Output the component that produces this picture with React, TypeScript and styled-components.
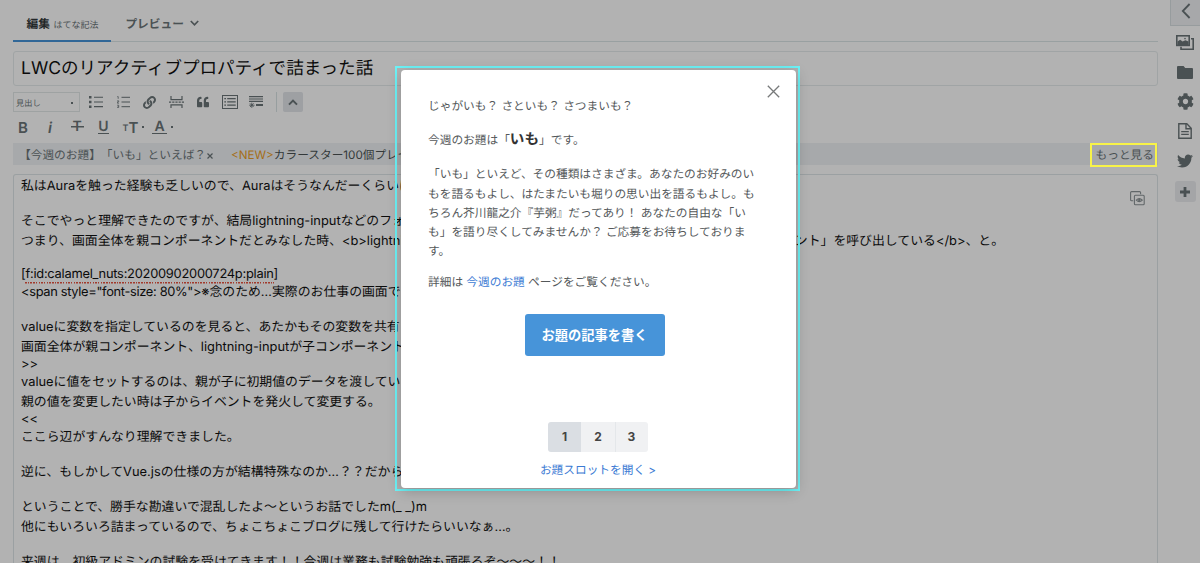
import React from "react";
import styled, { createGlobalStyle } from "styled-components";
import { FaCog, FaLink, FaQuoteLeft, FaTwitter } from "react-icons/fa";

const ink = "#6b7578";
const blue = "#4794d9";

const GlobalStyle = createGlobalStyle`
  * { box-sizing: border-box; }
  html, body { margin: 0; height: 563px; overflow: hidden; background: #fff; }
  body {
    font-family: Inter, "Noto Sans CJK JP", sans-serif;
    font-size: 11.7px;
    color: #555b5e;
    text-rendering: geometricPrecision;
    text-spacing-trim: space-all;
    -webkit-font-smoothing: antialiased;
  }
  p { margin: 0; }
  button { font: inherit; color: inherit; border: 0; padding: 0; background: none; }
  svg { display: block; flex: none; }
`;

const Screen = styled.div`
  position: relative;
  display: flex;
  justify-content: space-between;
  width: 1200px;
  height: 563px;
  overflow: hidden;
`;

const Editor = styled.main`
  display: flex;
  flex-direction: column;
  width: 1145px;
  margin-left: 13px;
`;

const Tabs = styled.nav`
  display: flex;
  height: 42px;
  box-shadow: inset 0 -1px 0 #dbe5e7;
`;

const Tab = styled.div<{ $active?: boolean }>`
  display: flex;
  align-items: center;
  gap: ${(p) => (p.$active ? 3.5 : 6)}px;
  padding: 7px 13px 0 ${(p) => (p.$active ? 13.5 : 14)}px;
  font-weight: 700;
  white-space: nowrap;
  color: ${(p) => (p.$active ? "#33393b" : ink)};
  border-bottom: 2px solid ${(p) => (p.$active ? blue : "transparent")};
`;

const Syntax = styled.span`
  font-size: 9px;
  font-weight: 400;
  padding-top: 1px;
  color: ${ink};
`;

const TitleField = styled.div`
  display: flex;
  align-items: center;
  height: 35px;
  margin-top: 9px;
  padding: 0 7px 2px;
  border: 1px solid #e6ebec;
  border-radius: 3px;
  font-size: 17.56px;
  color: #111;
  white-space: nowrap;
`;

const Toolbar = styled.div`
  display: flex;
  align-items: center;
  height: 20px;
  margin-top: 6px;
  color: ${ink};
`;

const StyleBar = styled(Toolbar)`
  height: 26px;
  margin-top: 1px;
  padding-top: 2px;
`;

const HeadingSelect = styled.div`
  display: flex;
  align-items: center;
  justify-content: space-between;
  width: 67px;
  height: 20px;
  margin-right: 3px;
  padding: 2px 6px 0 2px;
  border: 1px solid #e2e8e9;
  font-size: 8.2px;
`;

const Tool = styled.span<{ $w?: number }>`
  display: flex;
  align-items: center;
  justify-content: center;
  width: ${(p) => p.$w ?? 26.7}px;
  height: 20px;
`;

const Divider = styled.span`
  width: 1px;
  height: 20px;
  margin: 0 6px 0 6px;
  background: #d9e2e4;
`;

const FoldButton = styled.button`
  display: flex;
  align-items: center;
  justify-content: center;
  width: 20px;
  height: 20px;
  border-radius: 2px;
  background: #e2e5ea;
`;

const Glyph = styled.b<{ $italic?: boolean; $size?: number }>`
  font-family: Inter, sans-serif;
  font-size: ${(p) => p.$size ?? 15}px;
  font-weight: 600;
  font-style: ${(p) => (p.$italic ? "italic" : "normal")};
  line-height: 1;
`;

const Underlined = styled(Glyph)<{ $bar: number }>`
  display: flex;
  justify-content: center;
  width: ${(p) => p.$bar}px;
  line-height: 12px;
  border-bottom: 1.5px solid ${ink};
`;

const Struck = styled(Glyph)`
  display: flex;
  justify-content: center;
  width: 13px;
  background: linear-gradient(${ink}, ${ink}) center / 13px 1.5px no-repeat;
`;

const Small = styled(Glyph)`
  align-self: flex-end;
  padding-bottom: 4px;
`;

const Dot = styled.i`
  width: 2px;
  height: 2px;
  margin-left: 4px;
  background: ${ink};
`;

const TopicBar = styled.div`
  display: flex;
  align-items: center;
  height: 22px;
  margin-top: 4px;
  padding: 0 4px 0 6px;
  background: #f0f2f5;
  color: ${ink};
  white-space: nowrap;
`;

const Topic = styled.span`
  display: flex;
  align-items: center;
  margin-right: 17px;
  svg { margin-top: 3px; }
`;

const News = styled.span`
  color: #4b5254;
  em { font-style: normal; color: #ec9e25; }
`;

const More = styled.span`
  margin-left: auto;
`;

const Body = styled.section`
  position: relative;
  flex: 1;
  min-height: 0;
  margin-top: 9px;
  padding: 2px 7px 0;
  border: 1px solid #dfe6e8;
  border-bottom: 0;
  border-radius: 3px 3px 0 0;
  overflow: hidden;
`;

const Line = styled.p<{ $h?: number; $spread?: number; $track?: number }>`
  display: flex;
  justify-content: ${(p) => (p.$spread ? "space-between" : "flex-start")};
  width: ${(p) => (p.$spread ? `${p.$spread}px` : "auto")};
  height: ${(p) => p.$h ?? 19.5}px;
  line-height: ${(p) => p.$h ?? 19.5}px;
  font-size: 12.87px;
  letter-spacing: ${(p) => p.$track ?? 0}px;
  color: #111;
  white-space: pre;
`;

const Misspelt = styled.span`
  height: 17px;
  background: repeating-linear-gradient(90deg, #e8533f 0 1.5px, transparent 1.5px 2.7px) left bottom / 100% 1.5px no-repeat;
`;

const Markup = styled.span`
  letter-spacing: -0.33px;
`;

const PreviewToggle = styled.span`
  position: absolute;
  top: 16px;
  right: 12px;
  color: #8c9497;
`;

const Sidebar = styled.aside`
  display: flex;
  flex-direction: column;
  align-items: center;
  width: 30px;
  color: ${ink};
`;

const Collapse = styled.button`
  display: flex;
  align-items: center;
  justify-content: center;
  width: 30px;
  height: 26px;
  padding-bottom: 3px;
  background: #eff1f4;
  border-left: 1px solid #d9e0e3;
  border-bottom: 1px solid #d9e0e3;
`;

const SideItem = styled.span<{ $h?: number }>`
  display: flex;
  align-items: center;
  justify-content: center;
  height: ${(p) => p.$h ?? 30}px;
`;

const AddButton = styled.button`
  display: flex;
  align-items: center;
  justify-content: center;
  width: 21px;
  height: 21px;
  margin-top: 6px;
  border-radius: 3px;
  background: #ebedf0;
`;

const Overlay = styled.div`
  position: absolute;
  inset: 0;
  background: rgba(0, 0, 0, 0.3);
`;

const MoreHighlight = styled.div`
  position: absolute;
  left: 1090px;
  top: 143px;
  width: 67px;
  height: 24px;
  border: 2px solid #f8f348;
`;

const ModalHighlight = styled.div`
  position: absolute;
  left: 395px;
  top: 66px;
  width: 405px;
  height: 425px;
  padding: 2px 2px 1px 4px;
  border: 2px solid #6cf3f7;
`;

const Modal = styled.section`
  position: relative;
  display: flex;
  flex-direction: column;
  align-items: center;
  width: 395px;
  height: 418px;
  padding: 27px 28px 0 27px;
  border-radius: 4px;
  background: #fff;
  box-shadow: 0 3px 14px rgba(0, 0, 0, 0.22);
  color: #54585a;
`;

const Close = styled.button`
  position: absolute;
  top: 15px;
  right: 16px;
  color: #77797a;
`;

const Copy = styled.p<{ $gap?: number }>`
  width: 100%;
  margin-top: ${(p) => p.$gap ?? 0}px;
  line-height: 19.2px;
  white-space: nowrap;
  strong { font-size: 14.6px; line-height: 1; color: #333; }
`;

const Link = styled.a`
  color: #3c7bd4;
`;

const WriteButton = styled.button`
  width: 140px;
  height: 42px;
  margin: 21px 7px 0 0;
  border-radius: 3px;
  background: ${blue};
  color: #fff;
  font-size: 13.25px;
  font-weight: 700;
`;

const Pager = styled.div`
  display: flex;
  width: 100px;
  height: 30px;
  margin-top: 66px;
  border-radius: 3px;
  overflow: hidden;
`;

const Page = styled.button<{ $current?: boolean }>`
  flex: 1;
  background: ${(p) => (p.$current ? "#dadee3" : "#f0f1f3")};
  color: #444;
  font-size: 12px;
  font-weight: 700;
  & + & + & { box-shadow: inset 1px 0 0 #e4e7ea; }
`;

const SlotLink = styled(Link)`
  margin-top: 9px;
  line-height: 18px;
  white-space: nowrap;
`;

const Chevron = ({ d, w, h, s = 2 }: { d: string; w: number; h: number; s?: number }) => (
  <svg width={w} height={h} viewBox={`0 0 ${w} ${h}`} fill="none" stroke="currentColor" strokeWidth={s}>
    <path d={d} />
  </svg>
);

const BulletIcon = () => (
  <svg width="14" height="12" viewBox="0 0 14 12" fill="currentColor">
    <path d="M0 0h2.5v2.5H0zM0 4.7h2.5v2.5H0zM0 9.4h2.5v2.5H0zM5 .7h9v1.1H5zM5 5.4h9v1.1H5zM5 10.1h9v1.1H5z" />
  </svg>
);

const NumberIcon = () => (
  <svg width="13" height="12" viewBox="0 0 13 12" fill="none" stroke="currentColor">
    <path d="M4.5 1.3H13M4.5 6H13M4.5 10.7H13" />
    <path strokeWidth=".8" d="M.3.6h.9v2.2M.2 4.8h1.5v1.1H.4v1.3h1.5M.2 9.2h1.5v2.3H.2M.6 10.3h1" />
  </svg>
);

const BreakIcon = () => (
  <svg width="15" height="12" viewBox="0 0 15 12" fill="none" stroke="currentColor" strokeWidth="1.2">
    <path d="M2 0v3.6h11V0M2 12V8.8h11V12" />
    <path strokeDasharray="2.2 1" d="M0 6.2h15" />
  </svg>
);

const ContentsIcon = () => (
  <svg width="16" height="14" viewBox="0 0 16 14" fill="none" stroke="currentColor">
    <rect x=".5" y=".5" width="15" height="13" />
    <path strokeWidth="1.2" d="M2.3 3.6H4M5.2 3.6h8.5M2.3 6.9H4M5.2 6.9h8.5M2.3 10.2H4M5.2 10.2h8.5" />
  </svg>
);

const FootnoteIcon = () => (
  <svg width="14" height="12" viewBox="0 0 14 12" fill="none" stroke="currentColor">
    <path strokeWidth="1.1" d="M0 .6h14M0 3h14M0 5.4h14" />
    <path strokeWidth="2" d="M7 9h7" />
    <path strokeWidth=".9" d="M2.8 6.6v5.2M.2 9.2h5.4M1 7.4l3.6 3.6M4.6 7.4L1 11" />
  </svg>
);

const PhotosIcon = () => (
  <svg width="18" height="15" viewBox="0 0 18 15" fill="none" stroke="currentColor" strokeWidth="1.6">
    <rect x=".8" y=".8" width="12.4" height="9.6" />
    <path d="M15 3.8h2.2v10.4H5v-2.4" />
    <path fill="currentColor" stroke="none" d="M1.5 10V6.6l2.6-1.8 2.5 1.6L9.4 5.2l3.2 1.4V10z" />
    <circle cx="9" cy="3.6" r=".8" fill="currentColor" stroke="none" />
  </svg>
);

const FolderIcon = () => (
  <svg width="16" height="13" viewBox="0 0 16 13" fill="currentColor">
    <path d="M1 0h5.6l1.6 2H15a1 1 0 0 1 1 1v9a1 1 0 0 1-1 1H1a1 1 0 0 1-1-1V1a1 1 0 0 1 1-1z" />
  </svg>
);

const DocumentIcon = () => (
  <svg width="14" height="16" viewBox="0 0 14 16" fill="none" stroke="currentColor" strokeWidth="1.4">
    <path d="M.8.8h8l4.4 4.4v10H.8z" />
    <path d="M8 .8v5h5" />
    <path strokeWidth="1.2" d="M3.2 8.6h7.6M3.2 11.4h7.6" />
  </svg>
);

const PreviewIcon = () => (
  <svg width="15" height="15" viewBox="0 0 15 15" fill="none" stroke="currentColor" strokeWidth="1.1">
    <path d="M3.2 9.8H1.6a1 1 0 0 1-1-1V1.6a1 1 0 0 1 1-1h8a1 1 0 0 1 1 1v1.6" />
    <rect x="4.4" y="4.2" width="9.8" height="9.6" rx="1" />
    <path d="M6.3 9.1q3-3 6 0-3 3-6 0z" />
    <circle cx="9.3" cy="9.1" r=".7" />
  </svg>
);

const Blank = () => <Line $h={15.6} />;

export default function App() {
  return (
    <>
      <GlobalStyle />
      <Screen>
        <Editor>
          <Tabs>
            <Tab $active>
              編集<Syntax>はてな記法</Syntax>
            </Tab>
            <Tab>
              プレビュー
              <Chevron w={9} h={7} d="M.8 1L4.5 4.8 8.2 1" s={1.7} />
            </Tab>
          </Tabs>
          <TitleField>LWCのリアクティブプロパティで詰まった話</TitleField>
          <Toolbar>
            <HeadingSelect>
              見出し
              <Dot />
            </HeadingSelect>
            <Tool><BulletIcon /></Tool>
            <Tool><NumberIcon /></Tool>
            <Tool><FaLink size={13} /></Tool>
            <Tool><BreakIcon /></Tool>
            <Tool><FaQuoteLeft size={12} /></Tool>
            <Tool><ContentsIcon /></Tool>
            <Tool><FootnoteIcon /></Tool>
            <Divider />
            <FoldButton>
              <Chevron w={10} h={7} d="M1 5.6L5 1.6 9 5.6" />
            </FoldButton>
          </Toolbar>
          <StyleBar>
            <Tool $w={20}><Glyph>B</Glyph></Tool>
            <Tool $w={34}><Glyph $italic>i</Glyph></Tool>
            <Tool $w={20}><Struck $size={14}>T</Struck></Tool>
            <Tool $w={33}><Underlined $bar={11} $size={14}>U</Underlined></Tool>
            <Tool $w={27}>
              <Small $size={9}>T</Small><Glyph>T</Glyph><Dot />
            </Tool>
            <Tool $w={31}>
              <Underlined $bar={15} $size={14}>A</Underlined><Dot />
            </Tool>
          </StyleBar>
          <TopicBar>
            <Topic>【今週のお題】「いも」といえば？<Chevron w={8} h={6} d="M1.5 .5l5 5M6.5 .5l-5 5" s={1.2} /></Topic>
            <News><em>&lt;NEW&gt;</em>カラースター100個プレゼント</News>
            <More>もっと見る</More>
          </TopicBar>
          <Body>
            <Line>私はAuraを触った経験も乏しいので、Auraはそうなんだーくらいに</Line>
            <Blank />
            <Line>そこでやっと理解できたのですが、結局lightning-inputなどのフォ</Line>
            <Line $spread={983}>
              <span>つまり、画面全体を親コンポーネントだとみなした時、&lt;b&gt;lightning</span>
              <span>ネント」を呼び出している&lt;/b&gt;、と。</span>
            </Line>
            <Blank />
            <Line $h={16.4} $track={-0.25}>
              [<Misspelt>f:id:calamel_nuts:20200902000724p:plain</Misspelt>]
            </Line>
            <Line>
              <Markup>&lt;span style="font-size: 80%"&gt;</Markup>※念のため…実際のお仕事の画面では
            </Line>
            <Blank />
            <Line>valueに変数を指定しているのを見ると、あたかもその変数を共有</Line>
            <Line>画面全体が親コンポーネント、lightning-inputが子コンポーネント</Line>
            <Line $h={15.9}>&gt;&gt;</Line>
            <Line>valueに値をセットするのは、親が子に初期値のデータを渡している</Line>
            <Line>親の値を変更したい時は子からイベントを発火して変更する。</Line>
            <Line $h={15.8}>&lt;&lt;</Line>
            <Line>ここら辺がすんなり理解できました。</Line>
            <Blank />
            <Line>逆に、もしかしてVue.jsの仕様の方が結構特殊なのか…？？だから</Line>
            <Blank />
            <Line>ということで、勝手な勘違いで混乱したよ〜というお話でしたm(_ _)m</Line>
            <Line>他にもいろいろ詰まっているので、ちょこちょこブログに残して行けたらいいなぁ…。</Line>
            <Blank />
            <Line>来週は、初級アドミンの試験を受けてきます！！今週は業務も試験勉強も頑張るぞ〜〜〜！！</Line>
            <PreviewToggle><PreviewIcon /></PreviewToggle>
          </Body>
        </Editor>
        <Sidebar>
          <Collapse>
            <Chevron w={10} h={16} d="M8.6 1L1.8 8l6.8 7" s={1.8} />
          </Collapse>
          <SideItem $h={32}><PhotosIcon /></SideItem>
          <SideItem $h={29}><FolderIcon /></SideItem>
          <SideItem $h={28}><FaCog size={17} /></SideItem>
          <SideItem $h={32}><DocumentIcon /></SideItem>
          <SideItem $h={28}><FaTwitter size={16} /></SideItem>
          <AddButton>
            <Chevron w={10} h={10} d="M5 0v10M0 5h10" s={2.8} />
          </AddButton>
        </Sidebar>
        <Overlay />
        <MoreHighlight />
        <ModalHighlight>
          <Modal>
            <Close>
              <Chevron w={13} h={13} d="M.8 .8l11.4 11.4M12.2 .8L.8 12.2" s={1.3} />
            </Close>
            <Copy>じゃがいも？ さといも？ さつまいも？</Copy>
            <Copy $gap={15}>今週のお題は「<strong>いも</strong>」です。</Copy>
            <Copy $gap={15}>
              「いも」といえど、その種類はさまざま。あなたのお好みのい<br />
              もを語るもよし、はたまたいも堀りの思い出を語るもよし。も<br />
              ちろん芥川龍之介『芋粥』だってあり！ あなたの自由な「い<br />
              も」を語り尽くしてみませんか？ ご応募をお待ちしておりま<br />
              す。
            </Copy>
            <Copy $gap={12}>
              詳細は <Link>今週のお題</Link> ページをご覧ください。
            </Copy>
            <WriteButton>お題の記事を書く</WriteButton>
            <Pager>
              <Page $current>1</Page>
              <Page>2</Page>
              <Page>3</Page>
            </Pager>
            <SlotLink>お題スロットを開く &gt;</SlotLink>
          </Modal>
        </ModalHighlight>
      </Screen>
    </>
  );
}
